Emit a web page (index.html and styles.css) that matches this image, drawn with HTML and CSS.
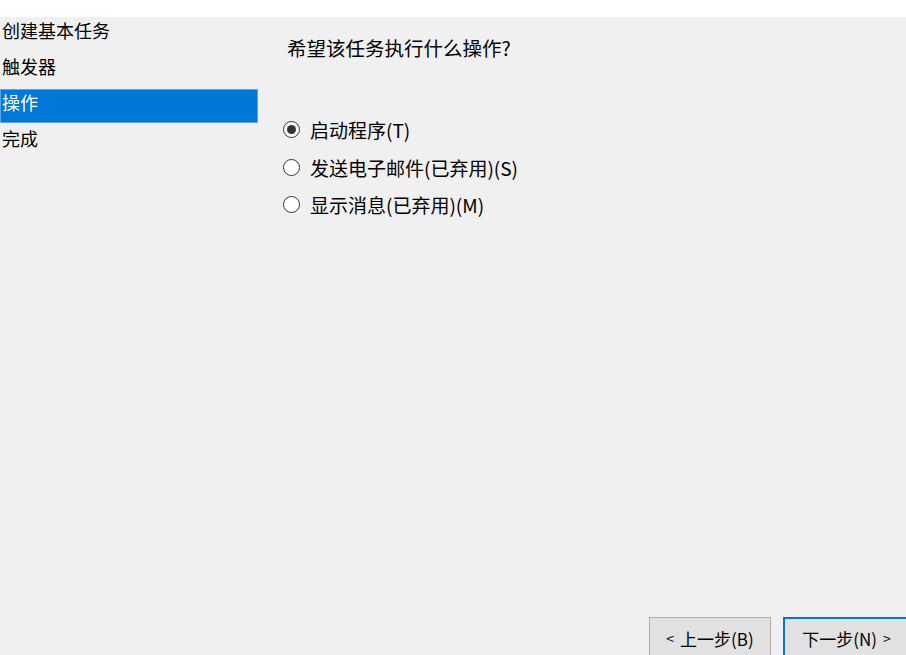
FILE: index.html
```html
<!DOCTYPE html>
<html lang="zh-CN">
<head>
<meta charset="utf-8">
<title>创建基本任务向导</title>
<link rel="stylesheet" href="styles.css">
</head>
<body>
<div class="topstrip"></div>
<div class="main">
  <nav class="nav">
    <div class="nav-item">创建基本任务</div>
    <div class="nav-item">触发器</div>
    <div class="nav-item selected">操作</div>
    <div class="nav-item">完成</div>
  </nav>
  <section class="content">
    <div class="question">希望该任务执行什么操作?</div>
    <div class="options">
      <label class="option"><span class="radio checked"></span><span class="label">启动程序(T)</span></label>
      <label class="option"><span class="radio"></span><span class="label">发送电子邮件(已弃用)(S)</span></label>
      <label class="option"><span class="radio"></span><span class="label">显示消息(已弃用)(M)</span></label>
    </div>
    <div class="footer">
      <div class="btn"><span class="arrow">&lt;</span> 上一步(B)</div>
      <div class="btn primary">下一步(N) <span class="arrow">&gt;</span></div>
    </div>
  </section>
</div>
</body>
</html>
```
FILE: styles.css
```css
html, body {
  margin: 0;
  padding: 0;
  width: 906px;
  height: 655px;
  overflow: hidden;
  background: #ffffff;
  font-family: "Noto Sans CJK SC", "Noto Sans", sans-serif;
  color: #000;
}

.topstrip {
  height: 17px;
  background: #ffffff;
}

.main {
  display: flex;
  height: 638px;
  background: #f0f0f0;
}

.nav {
  width: 258px;
  flex: none;
  display: flex;
  flex-direction: column;
  gap: 2px;
  padding-top: 0;
}

.nav-item {
  height: 26px;
  line-height: 26px;
  padding: 0 0 8px 2px;
  font-size: 18px;
  color: #000;
}

.nav-item.selected {
  background: #0078d7;
  color: #fff;
  box-shadow: inset 0 0 0 1px #5aa6e6;
}

.content {
  flex: 1;
  display: flex;
  flex-direction: column;
  padding-left: 25px;
}

.question {
  margin-top: 18px;
  padding-left: 4px;
  font-size: 19.5px;
  line-height: 26px;
}

.options {
  margin-top: 55px;
  display: flex;
  flex-direction: column;
  gap: 10px;
}

.option {
  display: flex;
  align-items: center;
  height: 27.5px;
  gap: 10px;
  font-size: 19px;
}

.radio {
  width: 15px;
  height: 15px;
  border: 1.5px solid #333;
  border-radius: 50%;
  background: #fff;
  position: relative;
  flex: none;
}

.radio.checked::after {
  content: "";
  position: absolute;
  left: 3px;
  top: 3px;
  width: 9px;
  height: 9px;
  border-radius: 50%;
  background: #333;
}

.label {
  line-height: 27px;
}

.footer {
  margin-top: auto;
  display: flex;
  justify-content: flex-end;
  gap: 12px;
  margin-right: -4px;
  margin-bottom: -4px;
}

.btn {
  width: 122px;
  height: 42px;
  box-sizing: border-box;
  border: 1px solid #adadad;
  background: #e1e1e1;
  font-size: 17px;
  display: flex;
  align-items: center;
  justify-content: center;
  gap: 6px;
}

.arrow {
  font-size: 14px;
}

.btn.primary {
  border: 2px solid #0078d7;
  width: 127px;
}
```
